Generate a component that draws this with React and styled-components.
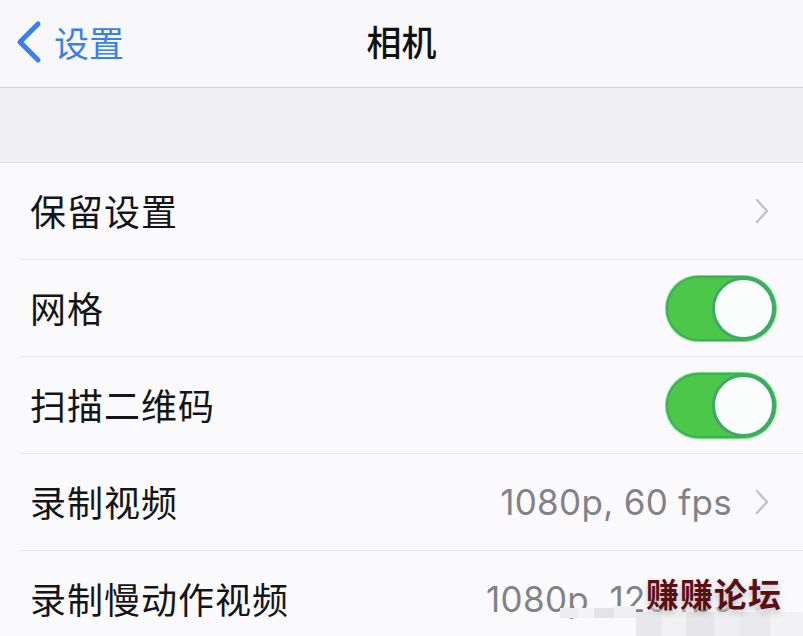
import React from "react";
import styled, { createGlobalStyle } from "styled-components";

const GlobalStyles = createGlobalStyle`
  html, body {
    margin: 0;
    padding: 0;
    background: #fafafc;
  }
  body {
    width: 803px;
    height: 636px;
    overflow: hidden;
    font-family: "Inter", "Noto Sans CJK SC", sans-serif;
  }
`;

const Screen = styled.div`
  position: relative;
  width: 803px;
  height: 636px;
  overflow: hidden;
  background: #fafafc;
`;

const NavBar = styled.div`
  height: 87px;
  display: grid;
  grid-template-columns: 1fr auto 1fr;
  align-items: center;
  background: #f8f8fa;
  border-bottom: 1px solid #d3d3d8;
`;

const BackButton = styled.div`
  display: flex;
  align-items: center;
  gap: 11px;
  padding-left: 15px;
  color: #3a7ff0;
  font-family: "Noto Sans CJK SC", sans-serif;
  font-size: 35px;
  line-height: 1;
  margin-top: -4px;
`;

const Title = styled.div`
  font-family: "Noto Sans CJK SC", sans-serif;
  font-size: 35px;
  font-weight: 500;
  color: #111;
  margin-top: -6px;
`;

const Band = styled.div`
  height: 74px;
  background: #efeff4;
  border-bottom: 1px solid #dedee3;
`;

const List = styled.div`
  padding-left: 20px;
  background: #fafafc;
`;

const Row = styled.div`
  height: 96px;
  display: flex;
  align-items: center;
  justify-content: space-between;
  border-bottom: 1px solid #e6e6eb;
  padding-left: 10px;
  padding-right: 27px;
`;

const Label = styled.div`
  font-family: "Noto Sans CJK SC", sans-serif;
  font-size: 36px;
  letter-spacing: 1px;
  color: #151517;
  line-height: 1;
  margin-top: -2px;
`;

const Accessory = styled.div`
  display: flex;
  align-items: center;
  gap: 22px;
`;

const Value = styled.div`
  font-family: "Inter", sans-serif;
  font-size: 35px;
  font-weight: 400;
  color: #828288;
  letter-spacing: 0.3px;
  line-height: 1;
  white-space: nowrap;
`;

const Chevron = styled.svg`
  width: 16px;
  height: 26px;
  margin-right: 6px;
`;

const Track = styled.div`
  width: 110px;
  height: 65px;
  border-radius: 33px;
  background: #4cc74a;
  box-shadow: 0 0 0 1px #6be46a, inset 0 0 0 2px #3fae62;
  display: flex;
  justify-content: flex-end;
  align-items: center;
  box-sizing: border-box;
`;

const Knob = styled.div`
  width: 63px;
  height: 63px;
  border-radius: 50%;
  background: #fbfcfc;
  border: 3px solid #3fa86a;
  box-sizing: border-box;
  margin-right: 1px;
`;

const Watermark = styled.div`
  position: absolute;
  left: 646px;
  top: 574px;
  width: 157px;
  white-space: nowrap;
  font-family: "Noto Sans CJK SC", sans-serif;
  font-size: 33px;
  font-weight: 700;
  color: #5a0f15;
  letter-spacing: 1px;
  text-shadow: 0 3px 6px rgba(0, 0, 0, 0.25);
  line-height: 1.2;
  background: linear-gradient(to bottom, rgba(250,250,252,0) 0, rgba(250,250,252,0.94) 20%, rgba(250,250,252,0.94) 80%, rgba(250,250,252,0) 100%);
`;

const Mosaic = styled.div`
  position: absolute;
  left: 560px;
  top: 606px;
  width: 243px;
  height: 30px;
  display: flex;
`;

const Tile = styled.div`
  width: ${(p) => p.w}px;
  height: ${(p) => p.h}px;
  margin-top: ${(p) => p.t}px;
  background: ${(p) => p.c};
`;

const ChevronIcon = () => (
  <Chevron viewBox="0 0 16 26">
    <path d="M3 2 L13 13 L3 24" fill="none" stroke="#c2c2c7" strokeWidth="2.4" strokeLinecap="round" strokeLinejoin="round" />
  </Chevron>
);

const Toggle = () => (
  <Track>
    <Knob />
  </Track>
);

const rows = [
  { label: "保留设置", kind: "link" },
  { label: "网格", kind: "toggle" },
  { label: "扫描二维码", kind: "toggle" },
  { label: "录制视频", kind: "link", value: "1080p, 60 fps" },
  { label: "录制慢动作视频", kind: "link", value: "1080p, 120 fps" },
];

const tiles = [
  { w: 18, h: 10, t: 2, c: "#ededf0" },
  { w: 16, h: 10, t: 2, c: "#f3f3f5" },
  { w: 20, h: 10, t: 2, c: "#e4e4e8" },
  { w: 22, h: 12, t: 0, c: "#f0f0f2" },
  { w: 26, h: 24, t: 6, c: "#e8e8ec" },
  { w: 24, h: 24, t: 6, c: "#f1f1f3" },
  { w: 28, h: 24, t: 6, c: "#e6e6ea" },
  { w: 26, h: 24, t: 6, c: "#efeff2" },
  { w: 30, h: 24, t: 6, c: "#e9e9ed" },
  { w: 33, h: 24, t: 6, c: "#f2f2f4" },
];

export default function App() {
  return (
    <Screen>
      <GlobalStyles />
      <NavBar>
        <BackButton>
          <svg width="28" height="44" viewBox="0 0 28 44">
            <path d="M23 4 L5 22 L23 40" fill="none" stroke="#3a7ff0" strokeWidth="5" strokeLinecap="round" strokeLinejoin="round" />
          </svg>
          设置
        </BackButton>
        <Title>相机</Title>
        <div />
      </NavBar>
      <Band />
      <List>
        {rows.map((r) => (
          <Row key={r.label}>
            <Label>{r.label}</Label>
            <Accessory>
              {r.value && <Value>{r.value}</Value>}
              {r.kind === "toggle" ? <Toggle /> : <ChevronIcon />}
            </Accessory>
          </Row>
        ))}
      </List>
      <Mosaic>
        {tiles.map((t, i) => (
          <Tile key={i} {...t} />
        ))}
      </Mosaic>
      <Watermark>赚赚论坛</Watermark>
    </Screen>
  );
}
